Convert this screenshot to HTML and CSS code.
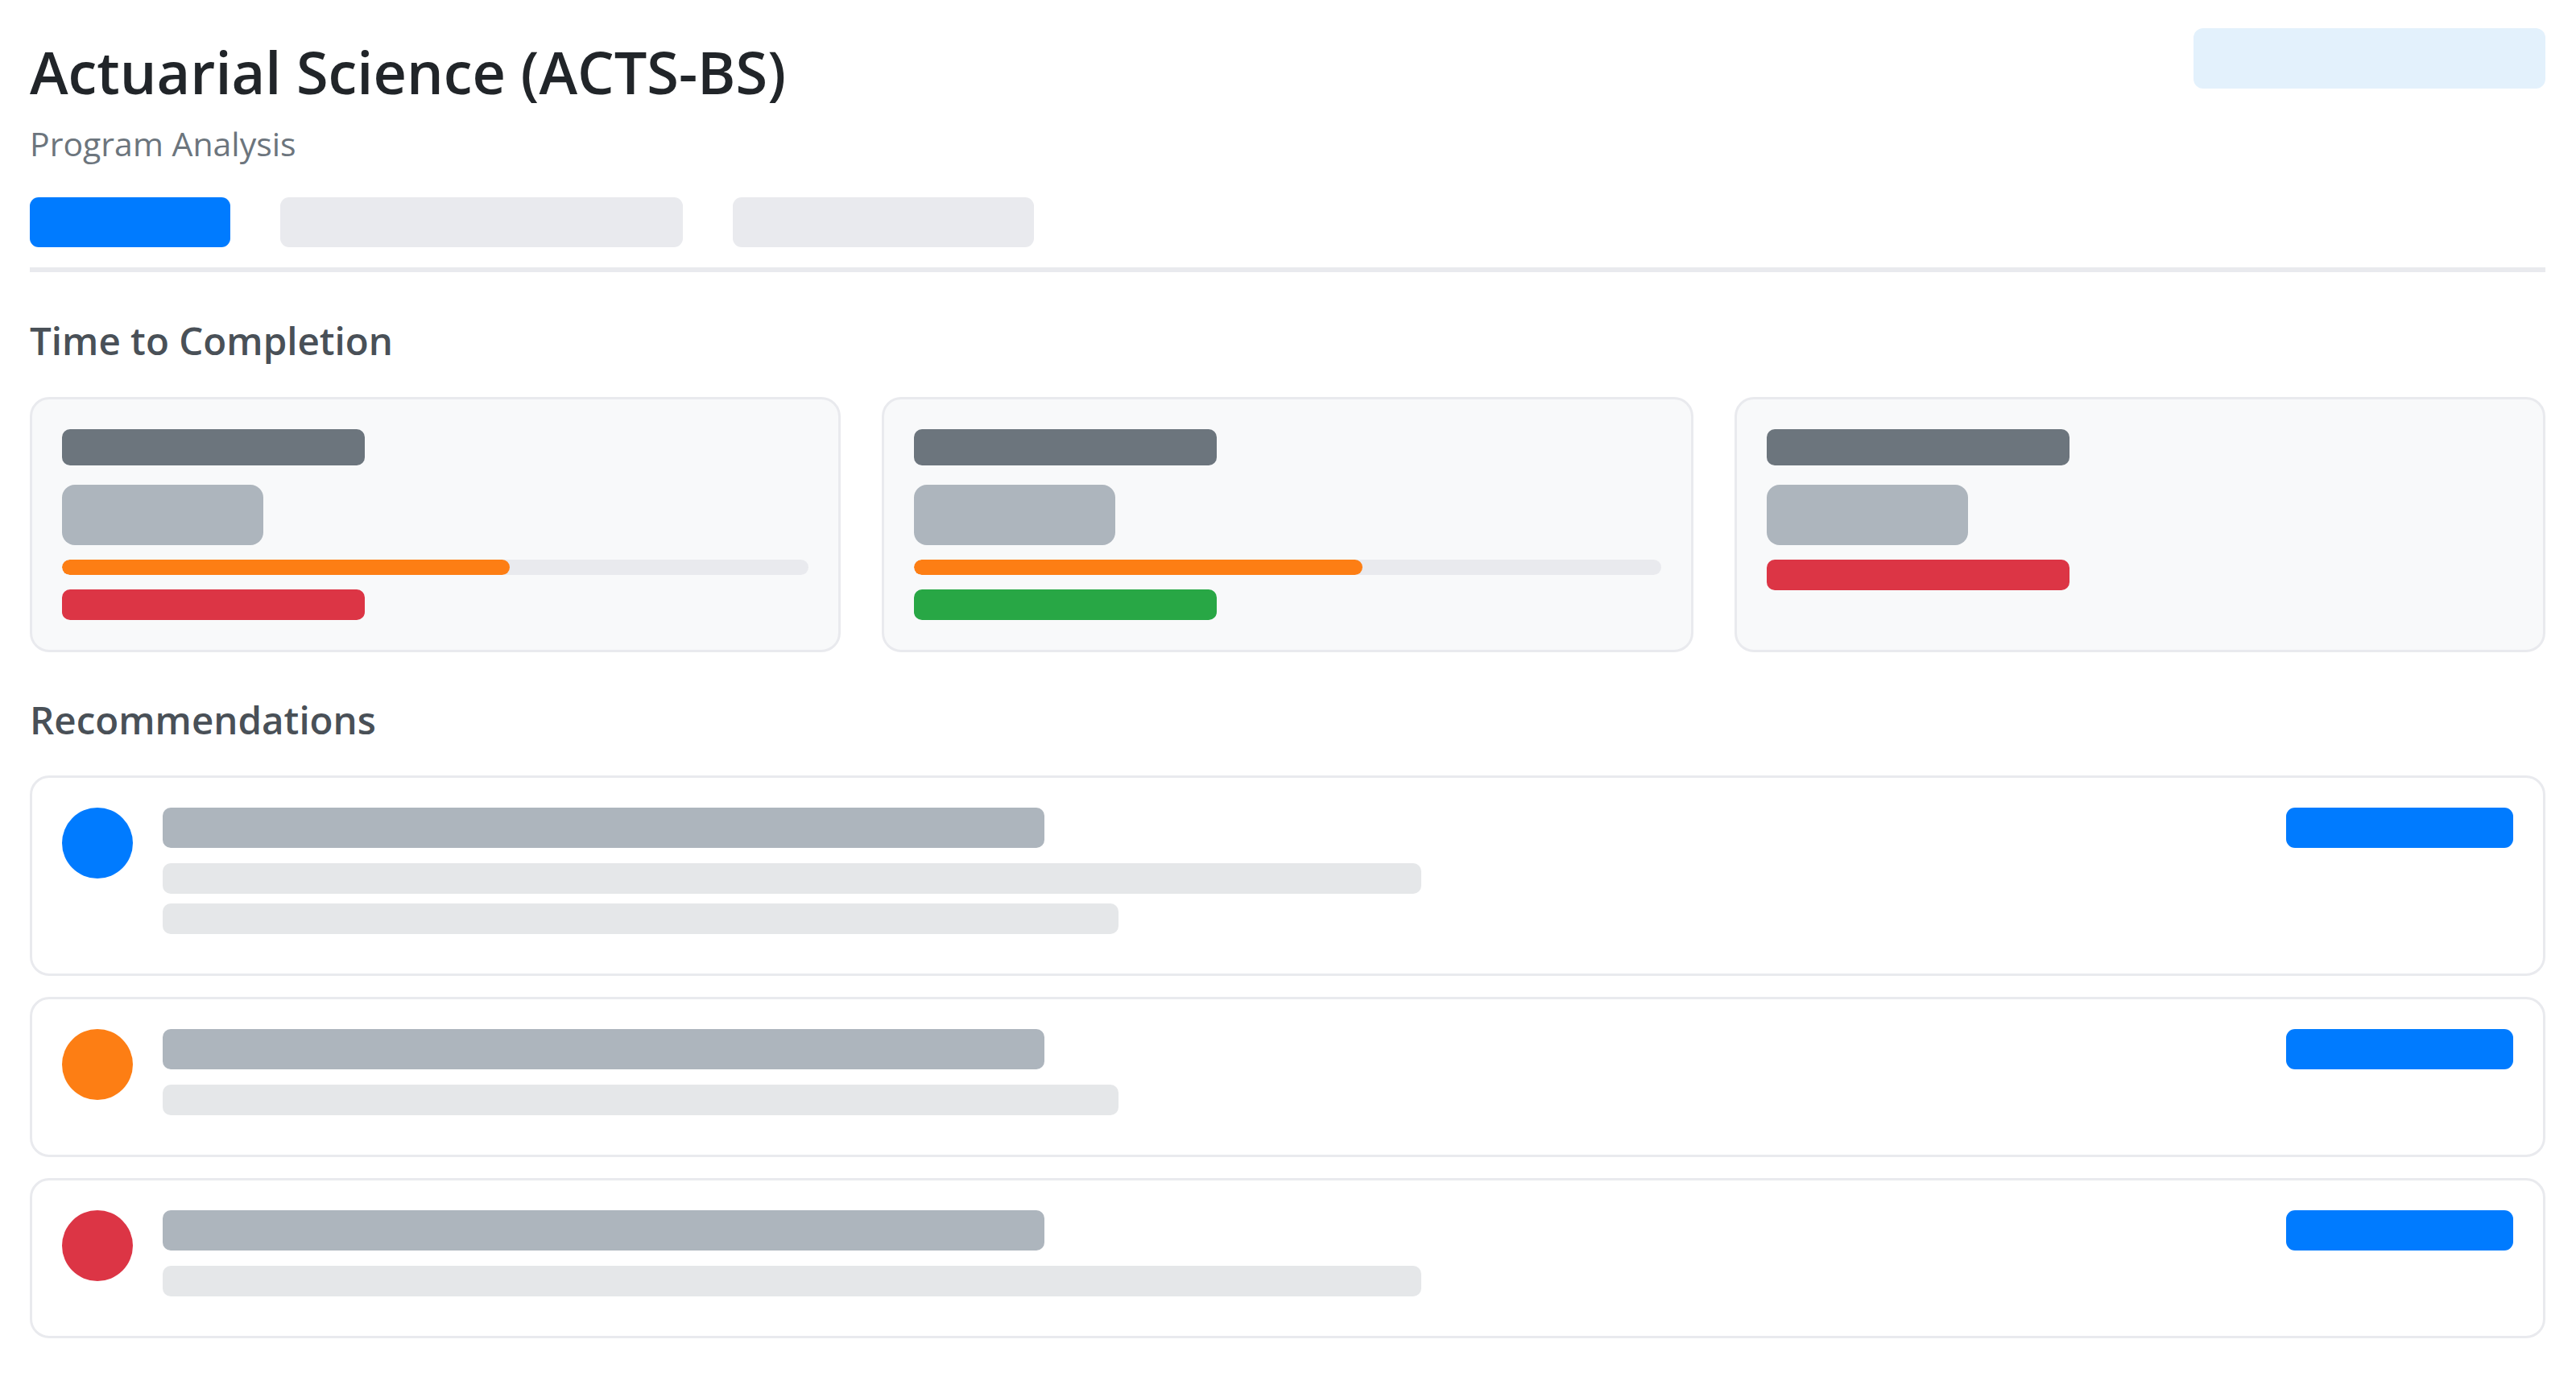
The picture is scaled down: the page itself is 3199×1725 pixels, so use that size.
FILE: index.html
```html
<!DOCTYPE html>
<html lang="en">
<head>
<meta charset="utf-8">
<title>Actuarial Science (ACTS-BS) — Program Analysis</title>
<link rel="stylesheet" href="styles.css">
</head>
<body>
<div class="page">
  <header class="header">
    <div class="title-block">
      <h1 class="title">Actuarial Science (ACTS-BS)</h1>
      <div class="subtitle">Program Analysis</div>
    </div>
    <div class="top-action"></div>
  </header>

  <nav class="tabs">
    <div class="tab tab-active"></div>
    <div class="tab tab-wide"></div>
    <div class="tab tab-mid"></div>
  </nav>
  <div class="divider"></div>

  <h2 class="section-title section-first">Time to Completion</h2>
  <div class="stat-grid">
    <div class="stat-card">
      <div class="sk sk-label"></div>
      <div class="sk sk-value"></div>
      <div class="progress"><div class="progress-fill fill-orange" style="width:60%"></div></div>
      <div class="sk sk-status status-red"></div>
    </div>
    <div class="stat-card">
      <div class="sk sk-label"></div>
      <div class="sk sk-value"></div>
      <div class="progress"><div class="progress-fill fill-orange" style="width:60%"></div></div>
      <div class="sk sk-status status-green"></div>
    </div>
    <div class="stat-card">
      <div class="sk sk-label"></div>
      <div class="sk sk-value"></div>
      <div class="sk sk-status status-red"></div>
    </div>
  </div>

  <h2 class="section-title section-second">Recommendations</h2>
  <div class="rec-list">
    <div class="rec-card">
      <div class="rec-dot dot-blue"></div>
      <div class="rec-body">
        <div class="sk rec-title"></div>
        <div class="sk rec-line line-long"></div>
        <div class="sk rec-line line-short"></div>
      </div>
      <div class="rec-action"></div>
    </div>
    <div class="rec-card">
      <div class="rec-dot dot-orange"></div>
      <div class="rec-body">
        <div class="sk rec-title"></div>
        <div class="sk rec-line line-short"></div>
      </div>
      <div class="rec-action"></div>
    </div>
    <div class="rec-card">
      <div class="rec-dot dot-red"></div>
      <div class="rec-body">
        <div class="sk rec-title"></div>
        <div class="sk rec-line line-long"></div>
      </div>
      <div class="rec-action"></div>
    </div>
  </div>
</div>
</body>
</html>
```

FILE: styles.css
```css
* {
  box-sizing: border-box;
}

html, body {
  margin: 0;
  padding: 0;
  background: #ffffff;
}

body {
  font-family: "Open Sans", "Noto Sans", "Liberation Sans", sans-serif;
  color: #212529;
}

.page {
  padding: 35px 38px 40px 37px;
}

/* Header */
.header {
  display: flex;
  justify-content: space-between;
  align-items: flex-start;
}

.title {
  margin: 0;
  font-size: 72px;
  font-weight: 600;
  line-height: 108px;
  color: #212529;
}

.subtitle {
  margin-top: 4px;
  font-size: 41px;
  line-height: 63px;
  color: #6c757d;
}

.top-action {
  width: 437px;
  height: 75px;
  border-radius: 12px;
  background: #e3f1fc;
}

/* Tabs */
.tabs {
  display: flex;
  gap: 62px;
  margin-top: 35px;
}

.tab {
  height: 62px;
  border-radius: 11px;
  background: #e9eaee;
}

.tab-active {
  width: 249px;
  background: #007bff;
}

.tab-wide {
  width: 500px;
}

.tab-mid {
  width: 374px;
}

.divider {
  margin-top: 25px;
  height: 6px;
  background: #e9eaee;
}

/* Section headings */
.section-title {
  margin: 0;
  font-size: 47.5px;
  font-weight: 600;
  line-height: 72px;
  color: #495057;
}

.section-first {
  margin-top: 49px;
}

.section-second {
  margin-top: 48px;
}

/* Stat cards */
.stat-grid {
  display: grid;
  grid-template-columns: repeat(3, 1fr);
  gap: 51px;
  margin-top: 34px;
}

.stat-card {
  background: #f8f9fa;
  border: 3px solid #e9eaee;
  border-radius: 24px;
  padding: 37px;
  display: flex;
  flex-direction: column;
  align-items: flex-start;
}

.sk {
  border-radius: 10px;
}

.sk-label {
  width: 376px;
  height: 45px;
  background: #6c757d;
}

.sk-value {
  width: 250px;
  height: 75px;
  margin-top: 24px;
  border-radius: 16px;
  background: #adb5bd;
}

.progress {
  align-self: stretch;
  height: 19px;
  margin-top: 18px;
  border-radius: 10px;
  background: #e9eaee;
  overflow: hidden;
}

.progress-fill {
  height: 100%;
  border-radius: 10px;
}

.fill-orange {
  background: #fd7e14;
}

.sk-status {
  width: 376px;
  height: 38px;
  margin-top: 18px;
}

.status-red {
  background: #dc3545;
}

.status-green {
  background: #28a745;
}

/* Recommendations */
.rec-list {
  display: flex;
  flex-direction: column;
  gap: 26px;
  margin-top: 33px;
}

.rec-card {
  display: flex;
  align-items: flex-start;
  border: 3px solid #e9eaee;
  border-radius: 24px;
  padding: 37px;
  background: #ffffff;
}

.rec-dot {
  flex: none;
  width: 88px;
  height: 88px;
  border-radius: 50%;
}

.dot-blue {
  background: #007bff;
}

.dot-orange {
  background: #fd7e14;
}

.dot-red {
  background: #dc3545;
}

.rec-body {
  flex: 1;
  margin-left: 37px;
}

.rec-title {
  width: 1095px;
  height: 50px;
  margin-bottom: 19px;
  background: #adb5bd;
}

.rec-line {
  height: 38px;
  margin-bottom: 12px;
  background: #e5e7e9;
}

.line-long {
  width: 1563px;
}

.line-short {
  width: 1187px;
}

.rec-action {
  flex: none;
  width: 282px;
  height: 50px;
  border-radius: 11px;
  background: #007bff;
}
```
